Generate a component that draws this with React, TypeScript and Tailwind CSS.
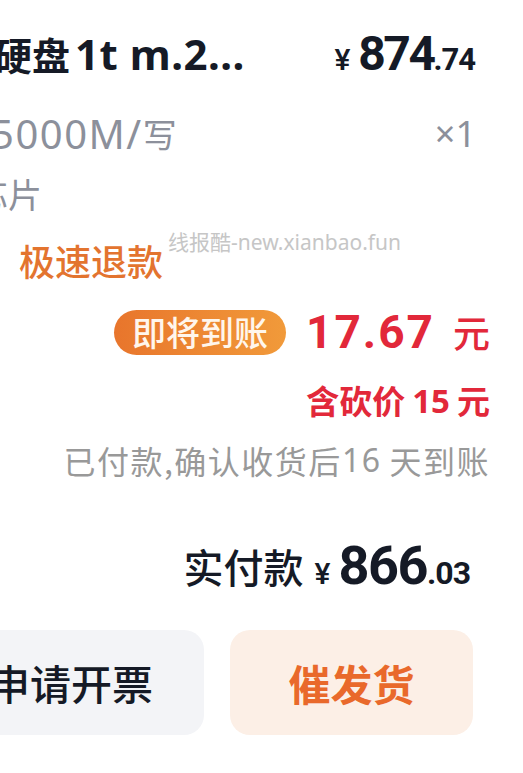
import React from 'react';

const cjk = "font-['Noto_Sans_CJK_SC','Noto_Sans',sans-serif]";
const latin = "font-['Noto_Sans','Noto_Sans_CJK_SC',sans-serif]";
const num = "font-['Roboto','Noto_Sans_CJK_SC',sans-serif]";

export default function App() {
  return (
    <div className={`relative w-[523px] h-[773px] overflow-hidden bg-white ${cjk}`}>
      {/* Item */}
      <div className="pt-[24px] pr-[48px] flex h-[84px] items-center justify-between">
        <div className="-ml-[6px] flex items-center text-[38px] font-bold text-[#151a26] whitespace-nowrap leading-none">
          硬盘<span className={`ml-[5px] text-[42px] tracking-[0.5px] ${latin}`}>1t m.2...</span>
        </div>
        <div className={`flex items-baseline text-[#151a26] font-bold leading-none ${num}`}>
          <span className="text-[30px] font-medium mr-[8px]">¥</span>
          <span className="text-[48px] tracking-[-2.5px]">874</span>
          <span className="text-[31px] tracking-[-1px]">.74</span>
        </div>
      </div>
      <div className="mt-[20px] pr-[47px] flex h-[60px] items-center justify-between text-[34px] text-[#8c909b] leading-none">
        <div className="-ml-[9px] flex items-center whitespace-nowrap">
          <span className={`text-[40px] tracking-[1.5px] ${latin}`}>5000M/</span>写
        </div>
        <div className={`text-[36px] ${latin}`}>×1</div>
      </div>
      <div className="flex h-[60px] items-center text-[34px] text-[#8c909b] leading-none">
        <div className="-ml-[26px] whitespace-nowrap">芯片</div>
      </div>

      {/* Refund */}
      <div className="mt-[11px] flex h-[50px] items-center pl-[19px] text-[36px] font-medium text-[#e3742f] leading-none">
        极速退款
      </div>
      <div className="mt-[22px] pr-[33px] flex h-[50px] items-center justify-end leading-none">
        <div className="flex h-[45px] items-center rounded-full bg-gradient-to-r from-[#e8752c] to-[#f19a3a] px-[18px] text-[34px] font-medium text-[#fff6ec]">
          即将到账
        </div>
        <div className={`ml-[20px] text-[46px] font-bold text-[#e2283a] tracking-[2px] ${num}`}>17.67</div>
        <div className="ml-[18px] text-[37px] font-medium text-[#e2283a]">元</div>
      </div>
      <div className="mt-[23px] pr-[33px] flex h-[40px] items-center justify-end text-[33px] font-bold text-[#e2283a] leading-none">
        含砍价<span className={`mx-[7px] ${latin}`}>15</span>元
      </div>
      <div className="mt-[20px] pr-[33px] flex h-[40px] items-center justify-end text-[32px] text-[#999999] leading-none whitespace-nowrap tracking-[1.5px]">
        已付款,确认收货后<span className={`mr-[8px] ${latin}`}>16</span>天到账
      </div>

      {/* Total */}
      <div className="mt-[61px] pr-[53px] flex h-[50px] items-center justify-end leading-none text-[#151a26]">
        <span className="text-[40px] font-medium">实付款</span>
        <div className={`ml-[11px] flex items-baseline font-bold ${num}`}>
          <span className="text-[30px] font-medium mr-[8px]">¥</span>
          <span className="text-[54px] tracking-[-1.5px]">866</span>
          <span className="text-[32px] tracking-[-1px]">.03</span>
        </div>
      </div>

      {/* Actions */}
      <div className="mt-[39px] flex gap-[26px] leading-none">
        <div className="-ml-[20px] flex h-[105px] w-[224px] items-center justify-end rounded-[20px] bg-[#f3f4f7] pr-[51px] text-[41px] font-medium text-[#151a26] whitespace-nowrap">
          申请开票
        </div>
        <div className="flex h-[105px] w-[243px] items-center justify-center rounded-[20px] bg-[#fcefe6] text-[42px] font-bold text-[#e9692b]">
          催发货
        </div>
      </div>

      {/* Watermark */}
      <div className={`pointer-events-none absolute left-[168px] top-[232px] text-[21px] text-[#c6c6c6] leading-none whitespace-nowrap ${latin}`}>
        线报酷-new.xianbao.fun
      </div>
    </div>
  );
}
